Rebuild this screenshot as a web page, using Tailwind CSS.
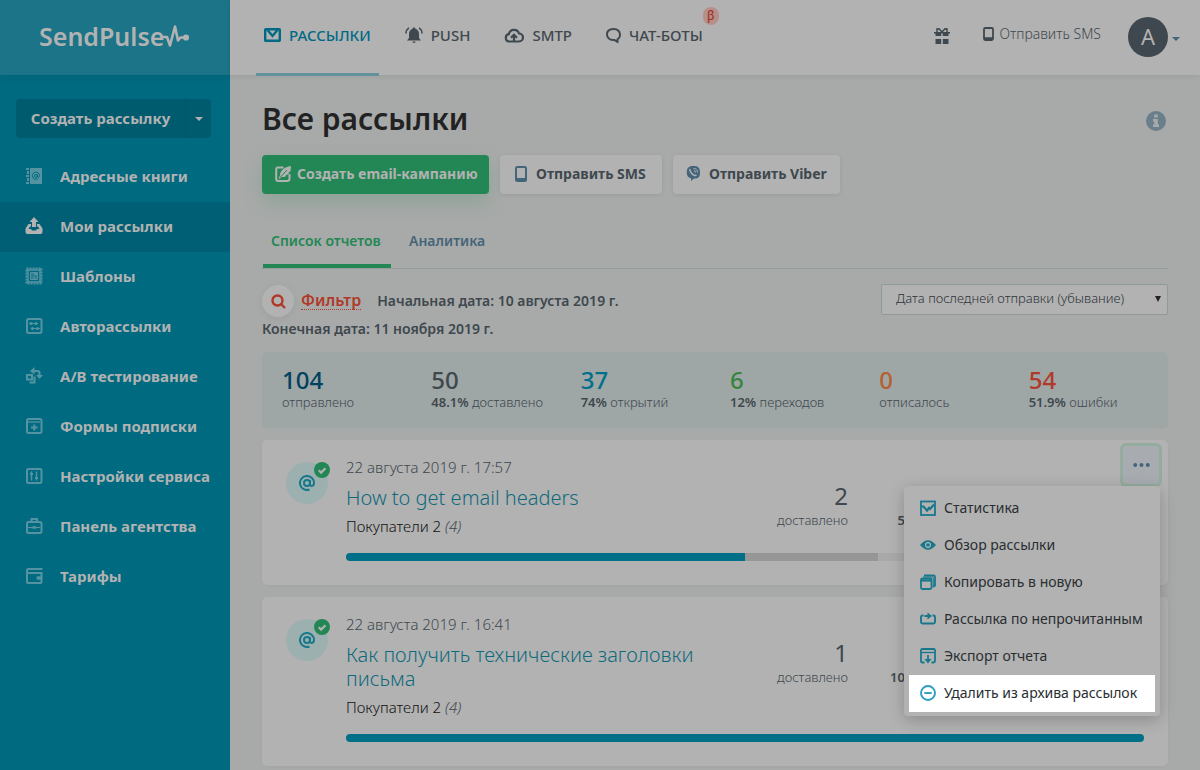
<!DOCTYPE html>
<html lang="ru">
<head>
<meta charset="utf-8">
<title>Все рассылки</title>
<script src="https://cdn.jsdelivr.net/npm/@tailwindcss/browser@4"></script>
</head>
<body class="flex min-h-screen bg-[#a8aaa9] font-['Noto_Sans',sans-serif] text-[#3e484e]">

<!-- Sidebar -->
<aside class="w-[230px] shrink-0 bg-[#006a80] text-[#b2b2b2]">
  <a href="#" class="flex h-[75px] items-center bg-[#1b7488] pb-1 pl-[39px] shadow-[0_1px_8px_rgba(0,0,0,0.08)]">
    <span class="text-[25px] leading-8 font-semibold">SendPulse</span>
    <svg class="h-6 w-7 -ml-[2px]" viewBox="0 0 28 24" fill="none" stroke="#b2b2b2" stroke-width="2.600" stroke-linejoin="round" stroke-linecap="round"><path d="M2 13h3l3 8.500L13 2.500l3 14 2.500-3H24"/><circle cx="24" cy="13.500" r="1.800" fill="#b2b2b2"/></svg>
  </a>
  <div class="mt-6 mr-[19px] mb-[14px] ml-4 flex h-[39px] overflow-hidden rounded-[4px] bg-[#005b6f]">
    <button class="flex-1 text-[15px] font-bold">Создать рассылку</button>
    <button aria-label="Ещё" class="flex w-[26px] items-center justify-center border-l border-[#00556a]"><svg class="h-1 w-2" viewBox="0 0 8 4" fill="#b2b2b2"><path d="M0 0h8L4 4z"/></svg></button>
  </div>
  <nav class="text-[15px] font-bold whitespace-nowrap">
    <a href="#" class="flex h-[50px] items-center gap-[17px] pb-[2px] pl-[25px]">
      <svg class="h-[18px] w-[18px]" viewBox="0 0 18 18" fill="#5593a2"><path d="M5 1h12v16H5z"/><path d="M1 1h3v2H1zM2 4h2v3H2zM1 8h3v2H1zM2 11h2v3H2zM1 15h3v2H1z"/><g fill="none" stroke="#006a80"><circle cx="11" cy="9" r="1.500"/><path d="M12.500 7.500v2.200c0 1 2 .8 2-.9a3.600 3.600 0 1 0-1.700 3"/></g></svg>
      Адресные книги</a>
    <a href="#" class="flex h-[50px] items-center gap-[17px] bg-[#005f74] pb-[2px] pl-[25px]">
      <svg class="h-[18px] w-[18px]" viewBox="0 0 18 18" fill="#b2b2b2"><path d="M9 0l4.500 5H11v5H7V5H4.500z"/><path fill-rule="evenodd" d="M3.500 7H6v2.500H5L3.500 12H6l1 1.500h4l1-1.500h2.500L13 9.500h-1V7h2.500L17.500 11.500V15a2 2 0 0 1-2 2h-13a2 2 0 0 1-2-2v-3.500z"/></svg>
      Мои рассылки</a>
    <a href="#" class="flex h-[50px] items-center gap-[17px] pb-[2px] pl-[25px]">
      <svg class="h-[18px] w-[18px]" viewBox="0 0 18 18" fill="none" stroke="#5593a2"><rect x="1.500" y="1.500" width="15" height="15" stroke-width="2" stroke-dasharray="2 1"/><path d="M3 3h12v12H3z" stroke-width="1.500"/><path fill="#5593a2" d="M5.500 5.500h7v7h-7z"/><path stroke="#006a80" d="M4.500 4.500h9v9h-9zM6 7h3M6 9h6M6 11h2.500M10 11h2"/></svg>
      Шаблоны</a>
    <a href="#" class="flex h-[50px] items-center gap-[17px] pb-[2px] pl-[25px]">
      <svg class="h-[18px] w-[18px]" viewBox="0 0 18 18" fill="none" stroke="#5593a2" stroke-width="2"><rect x="2" y="2" width="14.500" height="14" rx="1.500"/><path stroke-width="1.200" d="M4 6.500h9M6 11.500h9"/><g fill="#5593a2" stroke="none"><circle cx="6" cy="6.500" r="1.600"/><circle cx="11" cy="6.500" r="1.600"/><circle cx="7.500" cy="11.500" r="1.600"/><circle cx="12.500" cy="11.500" r="1.600"/></g></svg>
      Авторассылки</a>
    <a href="#" class="flex h-[50px] items-center gap-[17px] pb-[2px] pl-[25px]">
      <svg class="h-[18px] w-[18px]" viewBox="0 0 18 18" fill="none" stroke="#5593a2" stroke-width="2"><rect x="2" y="8" width="5" height="4.500"/><path d="M9.500 9.500v6H4.500"/><path d="M8.500 4h4q2 0 2 2v3"/><path fill="#5593a2" stroke="none" d="M9.500 0v7.500L5 4zM11 8h7l-3.500 4z"/></svg>
      A/B тестирование</a>
    <a href="#" class="flex h-[50px] items-center gap-[17px] pb-[2px] pl-[25px]">
      <svg class="h-[18px] w-[18px]" viewBox="0 0 18 18" fill="none" stroke="#5593a2" stroke-width="2"><rect x="2" y="2" width="14.500" height="14" rx="1.500"/><path stroke-width="1.300" d="M3 5h12"/><path d="M6 10.500h6.500M9.250 7.500v6"/></svg>
      Формы подписки</a>
    <a href="#" class="flex h-[50px] items-center gap-[17px] pb-[2px] pl-[25px]">
      <svg class="h-[18px] w-[18px]" viewBox="0 0 18 18" fill="none" stroke="#5593a2" stroke-width="2"><rect x="2" y="2" width="14.500" height="14" rx="1.500"/><path stroke-width="1.500" d="M6.500 4.500v9M11.500 4.500v9"/><path d="M5 7h3M10 11h3"/></svg>
      Настройки сервиса</a>
    <a href="#" class="flex h-[50px] items-center gap-[17px] pb-[2px] pl-[25px]">
      <svg class="h-[18px] w-[18px]" viewBox="0 0 18 18" fill="none" stroke="#5593a2" stroke-width="2"><rect x="2" y="5" width="14.500" height="11" rx="1.500"/><path d="M6.500 4.500V2H12v2.500"/><path stroke-width="1.200" d="M3 10.500h12"/><path stroke-width="2.500" d="M7.500 10.500H11"/></svg>
      Панель агентства</a>
    <a href="#" class="flex h-[50px] items-center gap-[17px] pb-[2px] pl-[25px]">
      <svg class="h-[18px] w-[18px]" viewBox="0 0 18 18" fill="none" stroke="#5593a2" stroke-width="2"><path d="M17.500 2H3.500Q2 2 2 3.500V15q0 1 1 1h12.500q1 0 1-1V6H2"/><path d="M17 9.500h-3.500q-1.500 0-1.500 1.500t1.500 1.500H17z" fill="#5593a2" stroke="none"/><path stroke-width="3" d="M11.500 11H17"/></svg>
      Тарифы</a>
  </nav>
</aside>

<div class="min-w-0 flex-1">
  <!-- Top bar -->
  <header class="flex h-[75px] items-center justify-between bg-[#b2b2b2] pl-[26px] pr-5 shadow-[0_1px_6px_rgba(0,0,0,0.08)]">
    <nav class="flex gap-[18px] self-stretch text-[15px] font-medium">
      <a href="#" class="-mb-px flex items-center gap-2 border-b-[3px] border-[#64929c] px-2 pb-[3px] text-[#006a85]">
        <svg class="h-[14px] w-[17px]" viewBox="0 0 17 14" fill="none" stroke="#006a85" stroke-width="2.400"><rect x="1.200" y="1.200" width="14.600" height="11.600" rx=".5"/><path d="M3.500 2l5 6 5-6"/></svg>
        РАССЫЛКИ</a>
      <a href="#" class="-mb-px flex items-center gap-2 border-b-[3px] border-transparent px-2 pb-[3px]">
        <svg class="h-[18px] w-[18px]" viewBox="0 0 18 18" fill="#3e484e"><path d="M9 1.500c1 0 1.300.6 1.300 1.200 2.500.7 3.700 2.800 3.700 5.300v4l2 2.500H2L4 12V8c0-2.500 1.200-4.600 3.700-5.300 0-.6.300-1.200 1.300-1.200zM7.500 15.500h3a1.500 1.500 0 0 1-3 0z"/><path fill="none" stroke="#3e484e" stroke-width="1.500" d="M1 7.500C1 5 2 3 4 1.800M17 7.500c0-2.500-1-4.500-3-5.700"/></svg>
        PUSH</a>
      <a href="#" class="-mb-px flex items-center gap-2 border-b-[3px] border-transparent px-2 pb-[3px]">
        <svg class="h-[15px] w-5" viewBox="0 0 20 15" fill="none" stroke="#3e484e" stroke-width="2.200"><path d="M5 13.500a3.700 3.700 0 0 1-.2-7.300A5.300 5.300 0 0 1 15 5.500a4 4 0 0 1 0 8z"/><path d="M10 14V8.500M7 9.800l3-3 3 3"/></svg>
        SMTP</a>
      <a href="#" class="relative -mb-px flex items-center gap-2 border-b-[3px] border-transparent px-2 pb-[3px]">
        <svg class="h-[15px] w-[15px]" viewBox="0 0 15 15" fill="none" stroke="#3e484e" stroke-width="2"><path d="M11.500 14v-2.700A5.500 5 0 0 0 14 7c0-3.300-2-6-6.500-6S1 3.500 1 6.500 3.500 12 7 12h1.500z"/></svg>
        ЧАТ-БОТЫ
        <span class="absolute top-[7px] -right-2 flex h-[18px] w-4 items-center justify-center rounded-full bg-[#b58f88] text-xs text-[#a03528]">β</span></a>
    </nav>
    <div class="flex items-center pb-[2px]">
      <button aria-label="Подарки" class="pb-[2px]"><svg class="h-4 w-4" viewBox="0 0 16 16" fill="#3e484e"><path d="M1.500 4.500h5.700V8H1.500zM8.800 4.500h5.700V8H8.800zM1.500 11h5.700v5H1.500zM8.800 11h5.700v5H8.800z"/><path d="M0 4h16v1.500H0z"/><path fill="none" stroke="#3e484e" stroke-width="1.500" d="M8 4L5 .8 3 1v3M8 4l3-3.200 2 .2v3"/></svg></button>
      <a href="#" class="ml-[33px] flex items-center gap-[5px] pb-[5px] text-sm font-light">
        <svg class="h-[14px] w-[11px]" viewBox="0 0 11 14" fill="none" stroke="#3e484e" stroke-width="1.800"><rect x="1" y="1" width="9" height="12" rx="1.200"/><path d="M1 11.500h9" stroke-width="2.500"/></svg>
        Отправить SMS</a>
      <button class="ml-[27px] flex items-center gap-1" aria-label="Профиль">
        <span class="flex size-10 items-center justify-center rounded-full bg-[#3e484e] text-[22px] text-[#b2b2b2]">A</span>
        <svg class="mt-1 h-1 w-2" viewBox="0 0 8 4" fill="#446579"><path d="M0 0h8L4 4z"/></svg>
      </button>
    </div>
  </header>

  <main class="px-8 pt-6 pb-1">
    <div class="flex items-center justify-between pr-[2px]">
      <h1 class="text-[30px] leading-10 font-semibold text-[#222]">Все рассылки</h1>
      <button aria-label="Информация" class="pt-1"><svg class="size-5" viewBox="0 0 20 20"><circle cx="10" cy="10" r="10" fill="#6a7f8c"/><path fill="#a8aaa9" d="M8.200 3.500h3.600v3H8.200zM7 8h4.800v5.500H13V16H7v-2.500h1.300v-3H7z"/></svg></button>
    </div>

    <div class="mt-4 flex gap-[11px] text-sm font-semibold whitespace-nowrap">
      <button class="flex h-[39px] w-[227px] items-center gap-1.5 rounded-[4px] bg-[#238755] pb-[2px] pl-[13px] font-bold text-[#b2b2b2] shadow-[0_8px_20px_rgba(35,135,85,0.2)]">
        <svg class="h-4 w-4 shrink-0" viewBox="0 0 16 16" fill="none" stroke="#b2b2b2" stroke-width="2"><path d="M8.500 1.500H3Q1.200 1.500 1.200 3.500v9.500q0 2 2 2H12q2.500 0 2.500-2V8"/><path fill="#b2b2b2" stroke="none" d="M16 0l-.5 5.500-2 .5.800.8-2 2-2 .2 1 .8-2 1.200H6.500L4.500 13l-1-1L5 9.500C5 5 9 1 16 0z"/><path stroke="#238755" stroke-width="1" d="M5 11.500L12 4"/></svg>
        Создать email-кампанию</button>
      <button class="flex h-[39px] w-[162px] items-center gap-[9px] rounded-[4px] bg-[#b2b2b2] pb-[2px] pl-[15px] font-bold shadow-[0_1px_4px_rgba(0,0,0,0.08)]">
        <svg class="h-4 w-3 shrink-0" viewBox="0 0 12 16" fill="none" stroke="#446579" stroke-width="2"><rect x="1" y="1" width="10" height="14" rx="1.500"/><path d="M1 13.500h10" stroke-width="3"/></svg>
        Отправить SMS</button>
      <button class="flex h-[39px] w-[167px] items-center gap-2 rounded-[4px] bg-[#b2b2b2] pb-[2px] pl-[13px] font-bold shadow-[0_1px_4px_rgba(0,0,0,0.08)]">
        <svg class="h-[15px] w-[15px] shrink-0" viewBox="0 0 15 15"><path fill="#446579" d="M7.500 0C12 0 14 1.500 14 6.500S12 12.500 8 12.500L5 15v-2.800C2 11.500.8 10 .8 6.500.8 1.500 3 0 7.500 0z"/><path fill="none" stroke="#b2b2b2" stroke-width="1.500" d="M4.300 3c-1 1 .2 3 1.500 4.500S9.300 10 10.500 9"/><path fill="none" stroke="#b2b2b2" d="M7.500 2.500c2.500 0 4 1.500 4 4M8 4.500q1.500.3 1.500 2"/></svg>
        Отправить Viber</button>
    </div>

    <nav class="mt-[34px] flex h-[41px] border-b border-[#929c9b] pl-px text-sm font-semibold">
      <a href="#" class="flex h-10 w-32 border-b-4 border-[#238755] pt-[3px] pl-2 text-[#238755]">Список отчетов</a>
      <a href="#" class="flex h-10 pt-[3px] pl-[18px] text-[#446579]">Аналитика</a>
    </nav>

    <div class="mt-[15px] flex items-start justify-between gap-4 text-sm font-semibold">
      <div class="pt-px">
        <div class="flex items-center">
          <button class="flex items-center gap-[7px] text-base text-[#b03a2a]">
            <span class="flex size-8 items-center justify-center rounded-full bg-[#b2b2b2] shadow-[0_2px_8px_rgba(0,0,0,0.07)]"><svg class="h-[15px] w-[15px]" viewBox="0 0 15 15" fill="none" stroke="#b03a2a" stroke-width="2.400"><circle cx="6.500" cy="6.500" r="5"/><path d="M9.500 9.500l4.500 4.500"/></svg></span>
            <span class="border-b border-dotted border-[#b03a2a] leading-[17px]">Фильтр</span></button>
          <span class="ml-4">Начальная дата: 10 августа 2019 г.</span>
        </div>
        <div class="mt-[2px] leading-5">Конечная дата: 11 ноября 2019 г.</div>
      </div>
      <div class="relative h-[31px] w-[287px]">
        <select aria-label="Сортировка" class="h-full w-full appearance-none rounded-[2px] border border-[#8f9a9b] bg-[#b2b2b2] px-[14px] pb-[2px] text-[13px] font-light text-[#2e3538]"><option>Дата последней отправки (убывание)</option></select>
        <svg class="pointer-events-none absolute top-3 right-[7px] h-[6px] w-[6px]" viewBox="0 0 6 6" fill="#222"><path d="M0 0h6L3 6z"/></svg>
      </div>
    </div>

    <section class="mt-[13px] grid grid-cols-6 rounded-[5px] bg-[#9fa6a6] px-[5px] pt-[14px] pb-[17px] text-[13px] whitespace-nowrap">
      <div class="pl-[15px]"><div class="text-2xl leading-7 font-medium text-[#00425f]">104</div><div class="leading-[17px] font-light">отправлено</div></div>
      <div class="pl-[15px]"><div class="text-2xl leading-7 font-medium">50</div><div class="leading-[17px] font-light"><b class="font-semibold">48.1%</b> доставлено</div></div>
      <div class="pl-[15px]"><div class="text-2xl leading-7 font-medium text-[#006f8a]">37</div><div class="leading-[17px] font-light"><b class="font-semibold">74%</b> открытий</div></div>
      <div class="pl-[15px]"><div class="text-2xl leading-7 font-medium text-[#37853d]">6</div><div class="leading-[17px] font-light"><b class="font-semibold">12%</b> переходов</div></div>
      <div class="pl-[15px]"><div class="text-2xl leading-7 font-medium text-[#b5602f]">0</div><div class="leading-[17px] font-light">отписалось</div></div>
      <div class="pl-[15px]"><div class="text-2xl leading-7 font-medium text-[#b03a2a]">54</div><div class="leading-[17px] font-light"><b class="font-semibold">51.9%</b> ошибки</div></div>
    </section>

    <article class="relative mt-3 flex gap-[18px] rounded-[5px] bg-[#b2b2b2] px-6 pt-[15px] pb-6 shadow-[0_1px_3px_rgba(0,0,0,0.03)]">
      <div class="relative mt-[7px] flex size-[42px] shrink-0 items-center justify-center rounded-full bg-[#9db0b0]">
        <svg class="size-4" viewBox="0 0 16 16" fill="none" stroke="#17788c" stroke-width="2"><circle cx="8" cy="8" r="3"/><path d="M11 5v4.500c0 2.200 4 2 4-1.500a7 7 0 1 0-4.500 6.500"/></svg>
        <svg class="absolute top-0 -right-[2px] size-4" viewBox="0 0 16 16"><circle cx="8" cy="8" r="8" fill="#238755"/><path fill="none" stroke="#b2b2b2" stroke-width="2.200" d="M4.800 8.300l2.300 2.300 4.400-4.400"/></svg>
      </div>
      <div class="min-w-0 flex-1">
        <div class="flex">
          <div class="min-w-0 flex-1">
            <div class="text-[15px] leading-6 font-light">22 августа 2019 г. 17:57</div>
            <a href="#" class="mt-[7px] block text-xl leading-6 font-light text-[#0f6a7d]">How to get email headers</a>
            <div class="mt-1 text-[15px] leading-6 font-light text-[#111]">Покупатели 2 <i class="text-[#3e484e]">(4)</i></div>
          </div>
          <div class="flex pt-[27px] pr-[159px] text-right text-[13px] font-light">
            <div><div class="text-2xl leading-7 font-normal">2</div><div class="leading-5">доставлено</div></div>
            <div class="w-[137px]"><div class="text-2xl leading-7 font-normal">1</div><div class="leading-5"><b class="font-semibold">50%</b> открытий</div></div>
          </div>
        </div>
        <div class="mt-[15px] flex h-2 overflow-hidden rounded-full bg-[#a9a9a9]"><div class="bg-[#006f87]" style="width:50%"></div><div class="bg-[#969696]" style="width:16.67%"></div></div>
      </div>

      <button aria-label="Действия" class="absolute top-[3px] right-[6px] flex h-[44px] w-[42px] items-center justify-center rounded-[6px] border-[3px] border-[#93ac9e] bg-[#a8acb0]"><svg class="h-1 w-[17px]" viewBox="0 0 17 4" fill="#446579"><circle cx="2.200" cy="2" r="2"/><circle cx="8.500" cy="2" r="2"/><circle cx="14.800" cy="2" r="2"/></svg></button>

      <!-- Campaign actions menu -->
      <ul class="absolute top-[46px] right-2 z-10 w-64 rounded-[4px] bg-[#b2b2b2] px-[5px] py-1 text-sm whitespace-nowrap text-[#292e31] shadow-[0_4px_16px_rgba(0,0,0,0.22)]">
        <li><a href="#" class="flex h-[37px] items-center gap-2 pb-[2px] pl-[11px]">
          <svg class="size-4" viewBox="0 0 16 16" fill="none" stroke="#17788c" stroke-width="1.800"><rect x="1" y="1.500" width="14" height="13.500"/><path stroke-width="2.200" d="M1.500 6.500h2l3.500 4 2-2.500 1 1 4-4.500"/></svg>Статистика</a></li>
        <li><a href="#" class="flex h-[37px] items-center gap-2 pb-[2px] pl-[11px]">
          <svg class="size-4" viewBox="0 0 16 16"><path fill="#17788c" d="M0 8q8-9.500 16 0-8 9.500-16 0z"/><circle cx="8" cy="8" r="3" fill="#b2b2b2"/><circle cx="8" cy="8" r="1.800" fill="#17788c"/></svg>Обзор рассылки</a></li>
        <li><a href="#" class="flex h-[37px] items-center gap-2 pb-[2px] pl-[11px]">
          <svg class="size-4" viewBox="0 0 16 16" fill="none" stroke="#17788c" stroke-width="1.800"><rect x="1" y="4.500" width="10.500" height="10.500" rx="1.500"/><path d="M1 6.500h10.500" stroke-width="2.200"/><path d="M4 1.500h9.500Q15 1.500 15 3v8.500L13 13"/><path d="M3 3h9.500q.8 0 .8 1v8" stroke-width="1"/></svg>Копировать в новую</a></li>
        <li><a href="#" class="flex h-[37px] items-center gap-2 pb-[2px] pl-[11px]">
          <svg class="size-4" viewBox="0 0 16 16" fill="none" stroke="#17788c" stroke-width="1.900"><path d="M3.500 4.500H2.500Q1 4.500 1 6v5q0 1.500 1.500 1.500h11Q15 12.500 15 11V6q0-1.500-1.500-1.500h-1M4.500 5H8"/><path fill="#17788c" stroke="none" d="M7.500 1.500L12 5 7.500 8.500z"/></svg>Рассылка по непрочитанным</a></li>
        <li><a href="#" class="flex h-[37px] items-center gap-2 pb-[2px] pl-[11px]">
          <svg class="size-4" viewBox="0 0 16 16" fill="none" stroke="#17788c" stroke-width="1.800"><path d="M4.500 14.500H2.500Q1 14.500 1 13V2.500Q1 1 2.500 1h11Q15 1 15 2.500V13q0 1.500-1.500 1.500h-2"/><path stroke-width="1.300" d="M2 4.500h12"/><path d="M8 7v5"/><path fill="#17788c" stroke="none" d="M4.500 11h7L8 15.500z"/></svg>Экспорт отчета</a></li>
        <li><a href="#" class="flex h-[37px] items-center gap-2 bg-white pb-[2px] pl-[11px]">
          <svg class="size-4" viewBox="0 0 16 16" fill="none" stroke="#2e9cc4" stroke-width="1.900"><circle cx="8" cy="8" r="7"/><path d="M4.300 8h7.400"/></svg>Удалить из архива рассылок</a></li>
      </ul>
    </article>

    <article class="mt-3 flex gap-[18px] rounded-[5px] bg-[#b2b2b2] px-6 pt-[15px] pb-6 shadow-[0_1px_3px_rgba(0,0,0,0.03)]">
      <div class="relative mt-[7px] flex size-[42px] shrink-0 items-center justify-center rounded-full bg-[#9db0b0]">
        <svg class="size-4" viewBox="0 0 16 16" fill="none" stroke="#17788c" stroke-width="2"><circle cx="8" cy="8" r="3"/><path d="M11 5v4.500c0 2.200 4 2 4-1.500a7 7 0 1 0-4.500 6.500"/></svg>
        <svg class="absolute top-0 -right-[2px] size-4" viewBox="0 0 16 16"><circle cx="8" cy="8" r="8" fill="#238755"/><path fill="none" stroke="#b2b2b2" stroke-width="2.200" d="M4.800 8.300l2.300 2.300 4.400-4.400"/></svg>
      </div>
      <div class="min-w-0 flex-1">
        <div class="flex">
          <div class="min-w-0 flex-1">
            <div class="text-[15px] leading-6 font-light">22 августа 2019 г. 16:41</div>
            <a href="#" class="mt-[7px] block max-w-[400px] text-xl leading-6 font-light text-[#0f6a7d]">Как получить технические заголовки письма</a>
            <div class="mt-1 text-[15px] leading-6 font-light text-[#111]">Покупатели 2 <i class="text-[#3e484e]">(4)</i></div>
          </div>
          <div class="flex pt-[27px] pr-[159px] text-right text-[13px] font-light">
            <div><div class="text-2xl leading-7 font-normal">1</div><div class="leading-5">доставлено</div></div>
            <div class="w-[137px]"><div class="text-2xl leading-7 font-normal">1</div><div class="leading-5"><b class="font-semibold">100%</b> открытий</div></div>
          </div>
        </div>
        <div class="mt-[15px] flex h-2 overflow-hidden rounded-full bg-[#a9a9a9]"><div class="bg-[#006f87]" style="width:100%"></div></div>
      </div>
    </article>
  </main>
</div>
</body>
</html>
